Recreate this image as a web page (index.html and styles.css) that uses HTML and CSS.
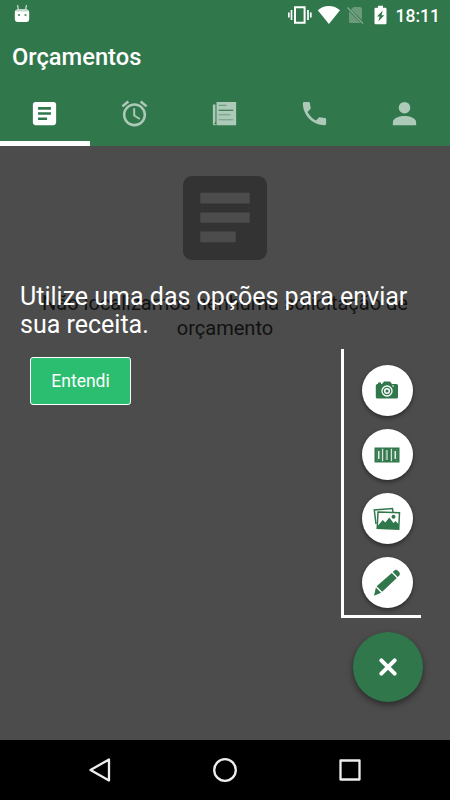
FILE: index.html
```html
<!DOCTYPE html>
<html lang="pt-BR">

<head>
    <meta charset="UTF-8">
    <meta name="viewport" content="width=device-width, initial-scale=1.0">
    <title>Orçamentos</title>
    <link rel="stylesheet" href="styles.css">
</head>

<body>
    <div class="app">
        <header>
            <div class="status-bar">
                <svg class="debug" width="16" height="19" viewBox="0 0 16 19">
                    <path d="M3.500 0l1 5M12.500 0l-1 5" stroke="#c3d7ca" stroke-width="1.300" />
                    <path d="M.8 7.500Q.8 4.500 4 4.500h8q3.200 0 3.200 3V14q0 3-3 3h-8.400q-3 0-3-3z" fill="#fff" />
                    <path d="M1.500 6.500Q2 4 4 4h8q2 0 2.500 2.500z" fill="#c3d7ca" />
                    <path d="M4 9h2v2H4zM10.500 9h2v2h-2z" fill="#6d9c7d" />
                </svg>
                <div class="status-icons">
                    <svg width="24" height="20" viewBox="0 0 24 20">
                        <path d="M7 2.300h9.600v15.400H7z" fill="none" stroke="#fff" stroke-width="2" />
                        <path d="M.8 7.500v5M3.500 5v10M20 5v10M22.800 7.500v5" stroke="#fff" stroke-width="1.700" />
                    </svg>
                    <svg class="wifi" width="24" height="20" viewBox="0 0 24 20">
                        <path d="M.8 5.300Q5.500 1 11.900 1t11.100 4.300L11.900 19z" fill="#fff" />
                    </svg>
                    <svg class="sim" width="17" height="18" viewBox="0 0 17 18">
                        <path d="M6.500 1H13q2 0 2 2v11L4 3.500zM2 5.300L13.800 17H3.500Q2 17 2 15.500z" fill="#6b9a7b" />
                        <path d="M.5 1.500l15.500 16" stroke="#86ac93" stroke-width="1.200" />
                    </svg>
                    <svg class="battery" width="13" height="20" viewBox="0 0 13 20">
                        <path d="M4 .7h5v2h2.200q1.300 0 1.300 1.300v14q0 1.300-1.300 1.300H1.800Q.5 19.300.5 18V4q0-1.300 1.300-1.300H4z" fill="#fff" />
                        <path d="M8.700 5.500L3 11.500h2.700L4.300 16.500l6-6.300H7.500z" fill="#31774c" />
                    </svg>
                    <span class="clock">18:11</span>
                </div>
            </div>
            <h1>Orçamentos</h1>
            <nav class="tabs">
                <a class="tab active">
                    <svg viewBox="0 0 24 24"><path d="M19 3H5c-1.100 0-2 .9-2 2v14c0 1.100.9 2 2 2h14c1.100 0 2-.9 2-2V5c0-1.100-.9-2-2-2zm-5 14H7v-2h7v2zm3-4H7v-2h10v2zm0-4H7V7h10v2z" /></svg>
                </a>
                <a class="tab">
                    <svg viewBox="0 0 24 24"><path d="M22 5.720l-4.600-3.860-1.290 1.530 4.600 3.860L22 5.720zM7.880 3.390L6.600 1.860 2 5.710l1.290 1.530 4.590-3.850zM12.500 8H11v6l4.750 2.850.75-1.230-4-2.370V8zM12 4c-4.970 0-9 4.030-9 9s4.020 9 9 9c4.970 0 9-4.030 9-9s-4.030-9-9-9zm0 16c-3.870 0-7-3.130-7-7s3.130-7 7-7 7 3.130 7 7-3.130 7-7 7z" /></svg>
                </a>
                <a class="tab">
                    <svg viewBox="0 0 24 24">
                        <path d="M5.800 3H21v18H5.800zM3 5h2v14h-.7v1.300h1V21H4q-1 0-1-1z" />
                        <path d="M7.500 5.700h6M7.500 13h9M7.500 16.800h11.300" stroke="#6b9d80" stroke-width=".8" />
                        <path d="M7.500 9.500h11.300" stroke="#31774c" stroke-width=".9" />
                    </svg>
                </a>
                <a class="tab">
                    <svg viewBox="0 0 24 24"><path d="M6.620 10.790c1.440 2.830 3.760 5.140 6.590 6.590l2.200-2.200c.27-.27.67-.36 1.020-.24 1.120.37 2.330.57 3.570.57.550 0 1 .45 1 1V20c0 .55-.45 1-1 1-9.390 0-17-7.610-17-17 0-.55.45-1 1-1h3.500c.550 0 1 .45 1 1 0 1.250.2 2.450.57 3.570.110.350.030.740-.25 1.020l-2.200 2.200z" /></svg>
                </a>
                <a class="tab">
                    <svg viewBox="0 0 24 24"><path d="M12 12a4.500 4.500 0 1 0 0-9 4.500 4.500 0 0 0 0 9zm0 2c-3.500 0-9 1.500-9 4.700V21h18v-2.300c0-3.200-5.500-4.700-9-4.700z" /></svg>
                </a>
            </nav>
        </header>

        <main>
            <div class="empty">
                <svg viewBox="0 0 24 24"><path d="M19 3H5c-1.100 0-2 .9-2 2v14c0 1.100.9 2 2 2h14c1.100 0 2-.9 2-2V5c0-1.100-.9-2-2-2zm-4.700 14.200H6.700v-2.300h7.600zm3-4.200H6.700v-2.200h10.600zm0-4.100H6.700V6.600h10.600z" /></svg>
                <p>Não localizamos nenhuma solicitação de<br>orçamento</p>
            </div>

            <!-- tutorial -->
            <div class="overlay">
                <p class="tip">Utilize uma das opções para enviar<br>sua receita.</p>
                <div class="overlay-row">
                    <button class="ok">Entendi</button>
                    <div class="actions">
                        <div class="fab">
                            <svg width="24" height="20" viewBox="0 0 24 20">
                                <path d="M2.500 3H7l2-2.500h6L17 3h4.500Q23 3 23 4.500V16q0 1.500-1.500 1.500h-19Q.8 17.500.8 16V4.500Q.8 3 2.500 3zM3 1.500h3V3H3z" fill="#31774c" />
                                <circle cx="12" cy="10" r="5" fill="none" stroke="#fff" stroke-width="1.300" />
                                <circle cx="12" cy="10" r="2.300" fill="none" stroke="#fff" stroke-width="1.500" />
                                <circle cx="18" cy="5" r=".8" fill="#fff" />
                            </svg>
                        </div>
                        <div class="fab">
                            <svg width="26" height="16" viewBox="0 0 26 16">
                                <path d="M.5.500h25v15H.5z" fill="#31774c" />
                                <path d="M8.700 1.800v12.400M17.300 1.800v12.400M13 3v10" stroke="#fff" stroke-width="1" />
                                <path d="M4.800 4v8M21.200 4v8" stroke="#fff" stroke-width="1.300" />
                                <path d="M4.500 2.500H3v11h1.500M21.500 2.500H23v11h-1.500M7 1.800v12.400M19 1.800v12.400M11.500 3v10" fill="none" stroke="#75a386" stroke-width=".5" />
                            </svg>
                        </div>
                        <div class="fab">
                            <svg width="28" height="24" viewBox="0 0 28 24">
                                <path d="M3 17L1.300 3 19.500 1.500l.5 4" fill="none" stroke="#31774c" stroke-width="1.500" />
                                <path d="M5 5l21.500.8-.8 16.500-21.500-1z" fill="#fff" stroke="#31774c" stroke-width="1.500" />
                                <path d="M4.500 19l5.300-6 2.500 2.500 4-5 4.200 5.500 2-2 3.500 3.500-.3 4.800L4.300 21.300z" fill="#31774c" />
                                <circle cx="20.500" cy="9.700" r="2" fill="#31774c" />
                            </svg>
                        </div>
                        <div class="fab">
                            <svg width="28" height="28" viewBox="0 0 28 28">
                                <path d="M19.800 3l1.700-1.600q1.500-1.300 3.300.3l1.500 1.500q1.400 1.600 0 3.200l-1.600 1.700zM18.800 4l5 5.100L9.200 22.800l-5.600-5.600zM2.900 18.400l5.200 5.300-7.100 3.100z" fill="#31774c" />
                            </svg>
                        </div>
                    </div>
                </div>
            </div>

            <div class="fab-main">
                <svg width="20" height="20" viewBox="0 0 20 20"><path d="M3.300 3.300l13.400 13.400M16.700 3.300L3.300 16.700" stroke="#fff" stroke-width="4" stroke-linecap="round" /></svg>
            </div>
        </main>

        <footer>
            <svg width="24" height="28" viewBox="0 0 24 28"><path d="M21 3.500v21L2.500 14z" /></svg>
            <svg width="24" height="28" viewBox="0 0 24 28"><circle cx="12" cy="14" r="10.800" /></svg>
            <svg width="24" height="28" viewBox="0 0 24 28"><path d="M2.500 4.500h19v19h-19z" /></svg>
        </footer>
    </div>
</body>

</html>
```

FILE: styles.css
```css
* {
    padding: 0;
    margin: 0;
    box-sizing: border-box;
}

body {
    font-family: Roboto, "Liberation Sans", sans-serif;
    color: #fff;
}

svg {
    display: block;
    flex: none;
}

.app {
    display: flex;
    flex-direction: column;
    width: 450px;
    height: 800px;
    overflow: hidden;
}

header {
    height: 146px;
    background-color: #31774c;
}

.status-bar {
    display: flex;
    justify-content: space-between;
    height: 30px;
    padding: 5px 10px 0 14px;
}

.status-icons {
    display: flex;
    align-items: flex-start;
}

.wifi {
    margin-left: 5px;
}

.sim {
    margin: 1px 0 0 6px;
}

.battery {
    margin-left: 10px;
}

.clock {
    margin-left: 9px;
    font-size: 17.500px;
    font-weight: 500;
    line-height: 22px;
}

h1 {
    height: 52px;
    padding-left: 12px;
    font-size: 23.700px;
    font-weight: 500;
    line-height: 54px;
}

.tabs {
    display: flex;
    height: 64px;
}

.tab {
    display: flex;
    flex: 1;
    align-items: center;
    justify-content: center;
    border-bottom: 5px solid transparent;
    padding-top: 4px;
}

.tab svg {
    width: 31px;
    height: 31px;
    margin-right: 1px;
    fill: #adc9b8;
}

.tab.active {
    border-color: #fff;
}

.tab.active svg {
    fill: #fff;
}

main {
    position: relative;
    flex: 1;
    background-color: #4c4c4c;
}

.empty {
    padding-top: 16px;
    color: #111;
    text-align: center;
}

.empty svg {
    width: 112px;
    height: 112px;
    margin: 0 auto;
    fill: #333;
}

.empty p {
    margin-top: 17px;
    font-size: 20px;
    line-height: 25px;
}

/* sits above the empty message */
.overlay {
    position: absolute;
    top: 137px;
    left: 0;
    width: 100%;
    padding: 0 29px 0 20px;
}

.tip {
    font-size: 25px;
    line-height: 28px;
    white-space: nowrap;
}

.overlay-row {
    display: flex;
    align-items: flex-start;
    justify-content: space-between;
    padding: 10px 0 0 10px;
}

.ok {
    width: 101px;
    height: 48px;
    margin-top: 8px;
    padding-bottom: 1px;
    border: 1.500px solid #fff;
    border-radius: 3px;
    background-color: #2bbd70;
    color: #fff;
    font-family: inherit;
    font-size: 17.500px;
}

.actions {
    display: flex;
    flex-direction: column;
    align-items: center;
    gap: 13px;
    width: 80px;
    height: 269px;
    padding: 16px 0 0 9px;
    border: solid #fff;
    border-width: 0 0 3px 3px;
}

.fab {
    display: flex;
    flex: none;
    align-items: center;
    justify-content: center;
    width: 51px;
    height: 51px;
    border-radius: 50%;
    background-color: #fff;
    box-shadow: 0 2px 4px rgba(0, 0, 0, .45);
}

.fab-main {
    position: absolute;
    right: 27px;
    bottom: 38px;
    display: flex;
    align-items: center;
    justify-content: center;
    width: 70px;
    height: 70px;
    border-radius: 50%;
    background-color: #31774c;
    box-shadow: 0 3px 6px rgba(0, 0, 0, .45);
}

footer {
    display: flex;
    align-items: center;
    justify-content: space-between;
    height: 60px;
    padding: 0 88px;
    background-color: #000;
}

footer svg {
    fill: none;
    stroke: #eee;
    stroke-width: 2.300;
    stroke-linejoin: round;
}
```
